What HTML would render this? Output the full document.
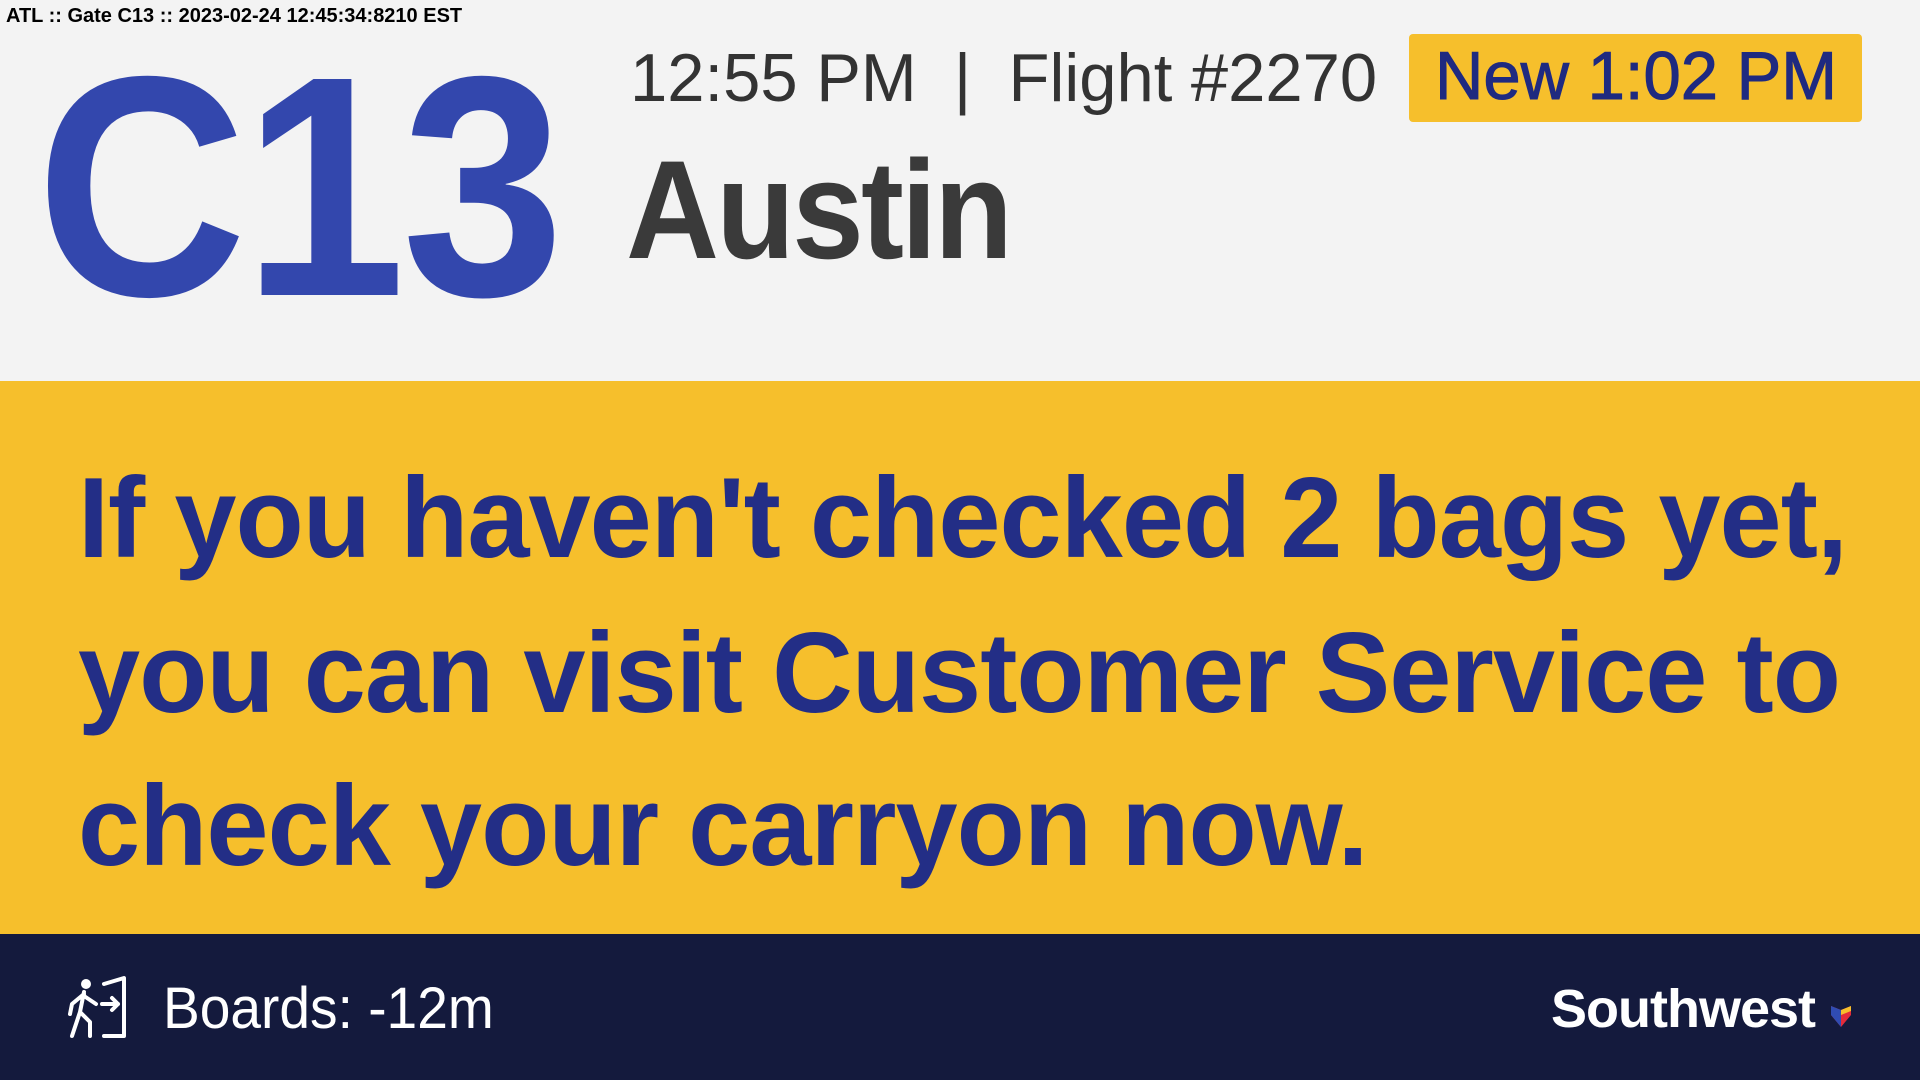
<!DOCTYPE html>
<html><head><meta charset="utf-8"><style>
*{margin:0;padding:0;box-sizing:border-box}
body{width:1920px;height:1080px;overflow:hidden;background:#f3f3f3;font-family:"Liberation Sans",sans-serif;position:relative}
.a{position:absolute;white-space:nowrap}
#top{left:6px;top:5px;font-size:20px;font-weight:bold;color:#000}
#gate{left:36px;top:30px;font-size:314px;font-weight:bold;color:#3347ad;letter-spacing:-4px;line-height:1;transform:scaleX(.93);transform-origin:left}
#time{left:630px;top:44px;font-size:68px;color:#333;line-height:1;transform:scaleX(.985);transform-origin:left}
#badge{left:1409px;top:34px;width:453px;height:88px;background:#f6bf2c;border-radius:4px}
#new{left:1435px;top:42px;font-size:68px;color:#1f2a80;line-height:1;transform:scaleX(.985);transform-origin:left;-webkit-text-stroke:1px #1f2a80}
#city{left:626px;top:140px;font-size:140px;font-weight:bold;color:#3a3a3a;line-height:1;letter-spacing:-3px;transform:scaleX(.92);transform-origin:left}
#band{left:0;top:381px;width:1920px;height:553px;background:#f6bf2c}
.m{left:78px;font-size:114px;font-weight:bold;color:#232e86;line-height:1;transform-origin:left;transform:scaleX(.98);letter-spacing:-1px}
#foot{left:0;top:934px;width:1920px;height:146px;background:#141a3d}
#boards{left:163px;top:980px;font-size:58px;color:#fff;line-height:1;transform:scaleX(.95);transform-origin:left}
#sw{left:1551px;top:982px;font-size:54px;font-weight:bold;color:#fff;letter-spacing:-1px;line-height:1}
</style></head><body>
<div class="a" id="top">ATL :: Gate C13 :: 2023-02-24 12:45:34:8210 EST</div>
<div class="a" id="gate">C13</div>
<div class="a" id="time">12:55 PM &nbsp;|&nbsp; Flight #2270</div>
<div class="a" id="badge"></div>
<div class="a" id="new">New 1:02 PM</div>
<div class="a" id="city">Austin</div>
<div class="a" id="band"></div>
<div class="a m" style="top:462px">If you haven't checked 2 bags yet,</div>
<div class="a m" style="top:617px">you can visit Customer Service to</div>
<div class="a m" style="top:770px">check your carryon now.</div>
<div class="a" id="foot"></div>
<svg class="a" style="left:66px;top:974px" width="64" height="66" viewBox="0 0 64 66" fill="none" stroke="#fff" stroke-width="4" stroke-linecap="round" stroke-linejoin="round">
<path d="M38 10 L58 4 L58 62 L38 62"/>
<path d="M36 30 L52 30 M46 24 L52 30 L46 36"/>
<circle cx="20" cy="10" r="5" fill="#fff" stroke="none"/>
<path d="M18 18 L14 38 L6 62 M14 38 L24 48 L24 62 M18 20 L6 30 L4 40 M18 22 L30 30"/>
</svg>
<div class="a" id="boards">Boards: -12m</div>
<div class="a" id="sw">Southwest</div>
<svg class="a" style="left:1830px;top:1000px" width="22" height="28" viewBox="0 0 22 28">
<path d="M1 6 L11 10 L21 6 L21 15 L11 27 L1 15Z" fill="#e42b3a"/>
<path d="M1 6 L11 10 L11 27 L1 15Z" fill="#304cb2"/>
<path d="M11 10 L21 6 L21 11 L11 15Z" fill="#f6bf2c"/>
</svg>
</body></html>
